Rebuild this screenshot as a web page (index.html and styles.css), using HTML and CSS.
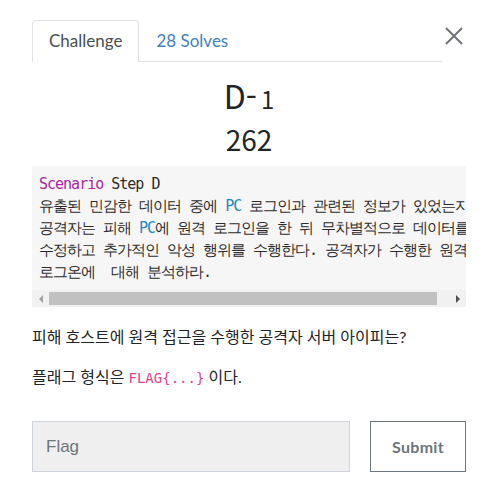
FILE: index.html
```html
<!DOCTYPE html>
<html lang="ko">
<head>
    <meta charset="UTF-8">
    <meta name="viewport" content="width=device-width, initial-scale=1.0">
    <title>D-1 - Challenge</title>
    <link rel="stylesheet" href="styles.css">
</head>
<body>
    <div class="modal-body">
        <div class="tab-row">
            <ul class="nav-tabs">
                <li class="nav-item active">Challenge</li>
                <li class="nav-item">28 Solves</li>
            </ul>
            <button type="button" class="close-btn" aria-label="Close">
                <svg width="18" height="18" viewBox="0 0 18 18">
                    <path d="M1 1 L17 17 M17 1 L1 17" stroke="#6f7378" stroke-width="2" fill="none"/>
                </svg>
            </button>
        </div>

        <h2 class="challenge-name">D-<span class="small-num">1</span></h2>
        <h3 class="challenge-value">262</h3>

        <div class="desc-box">
            <pre class="challenge-desc"><code><span class="kw">Scenario</span> Step D
유출된 민감한 데이터 중에 <span class="bi">PC</span> 로그인과 관련된 정보가 있었는지
공격자는 피해 <span class="bi">PC</span>에 원격 로그인을 한 뒤 무차별적으로 데이터를
수정하고 추가적인 악성 행위를 수행한다. 공격자가 수행한 원격
로그온에  대해 분석하라.</code></pre>
            <!-- 가로 스크롤바 -->
            <div class="scrollbar">
                <span class="scroll-arrow left"></span>
                <div class="scroll-track">
                    <div class="scroll-thumb"></div>
                </div>
                <span class="scroll-arrow right"></span>
            </div>
        </div>

        <p>피해 호스트에 원격 접근을 수행한 공격자 서버 아이피는?</p>
        <p>플래그 형식은 <code class="flag-code">FLAG{...}</code> 이다.</p>

        <form class="submit-row" id="flagForm">
            <input type="text" class="flag-input" name="answer" placeholder="Flag">
            <button type="submit" class="submit-btn">Submit</button>
        </form>
    </div>
</body>
</html>
```

FILE: styles.css
```css
body {
    margin: 0;
    background-color: #ffffff;
    color: #212529;
    font-family: 'Lato', 'Noto Sans CJK KR', sans-serif;
    font-size: 16px;
}

.modal-body {
    padding: 20px 24px 0 32px;
}

/* 탭 */
.tab-row {
    display: flex;
    align-items: flex-start;
}

.nav-tabs {
    flex: 1;
    display: flex;
    list-style: none;
    margin: 0;
    padding: 0;
    border-bottom: 1px solid #dee2e6;
}

.nav-item {
    padding: 8px 16px;
    line-height: 24px;
    font-size: 17px;
    color: #3e7fc1;
    border: 1px solid transparent;
    border-top-left-radius: 4px;
    border-top-right-radius: 4px;
    margin-bottom: -1px;
}

.nav-item.active {
    color: #495057;
    background-color: #ffffff;
    border-color: #dee2e6 #dee2e6 #ffffff;
}

.close-btn {
    width: 24px;
    height: 24px;
    margin-top: 4px;
    padding: 0;
    border: none;
    background: none;
    display: flex;
    justify-content: center;
    align-items: center;
    cursor: pointer;
}

/* 제목 */
.challenge-name {
    margin: 14px 0 0;
    text-align: center;
    font-family: 'Noto Sans CJK KR', sans-serif;
    font-weight: 400;
    font-size: 32px;
    line-height: 38px;
}

.small-num {
    font-size: 24px;
    margin-left: 4px;
}

.challenge-value {
    margin: 4px 0 0;
    text-align: center;
    font-family: 'Noto Sans CJK KR', sans-serif;
    font-weight: 400;
    font-size: 28px;
    line-height: 34px;
}

/* 설명 */
.desc-box {
    margin-top: 10px;
    background-color: #f6f6f6;
}

.challenge-desc {
    margin: 0;
    padding: 8px 7px 6px;
    overflow: hidden;
    font-family: 'Liberation Mono', 'Noto Sans CJK KR', monospace;
    font-size: 15px;
    letter-spacing: -1px;
    line-height: 21px;
    color: #2b2b2b;
}

.challenge-desc .kw {
    color: #a626a4;
}

.challenge-desc .bi {
    color: #1b8bbb;
}

.scrollbar {
    display: flex;
    align-items: center;
    height: 17px;
    background-color: #f1f1f1;
}

.scroll-track {
    flex: 1;
    height: 13px;
}

.scroll-thumb {
    width: 97%;
    height: 100%;
    background-color: #c1c1c1;
}

.scroll-arrow {
    width: 17px;
    display: flex;
    justify-content: center;
}

.scroll-arrow::before {
    content: "";
    border-top: 4px solid transparent;
    border-bottom: 4px solid transparent;
}

.scroll-arrow.left::before {
    border-right: 4px solid #a3a3a3;
}

.scroll-arrow.right::before {
    border-left: 4px solid #505050;
}

p {
    margin: 18px 0 16px;
    line-height: 24px;
}

p + p {
    margin-top: 0;
}

.flag-code {
    font-family: 'DejaVu Sans Mono', monospace;
    font-size: 14px;
    color: #e83e8c;
}

/* 제출 */
.submit-row {
    display: flex;
    gap: 20px;
    margin-top: 31px;
}

.flag-input {
    width: 318px;
    height: 51px;
    box-sizing: border-box;
    padding: 0 13px;
    background-color: #efefef;
    border: 1px solid #ced4da;
    font-family: 'Liberation Sans', sans-serif;
    font-size: 17px;
    color: #495057;
}

.flag-input::placeholder {
    color: #6c757d;
    opacity: 1;
}

.flag-input:focus {
    outline: none;
}

.submit-btn {
    width: 96px;
    height: 51px;
    background-color: #ffffff;
    border: 1px solid #6c757d;
    color: #6c757d;
    font-family: 'Lato', sans-serif;
    font-weight: bold;
    font-size: 16px;
    letter-spacing: 0.3px;
    cursor: pointer;
}
```
